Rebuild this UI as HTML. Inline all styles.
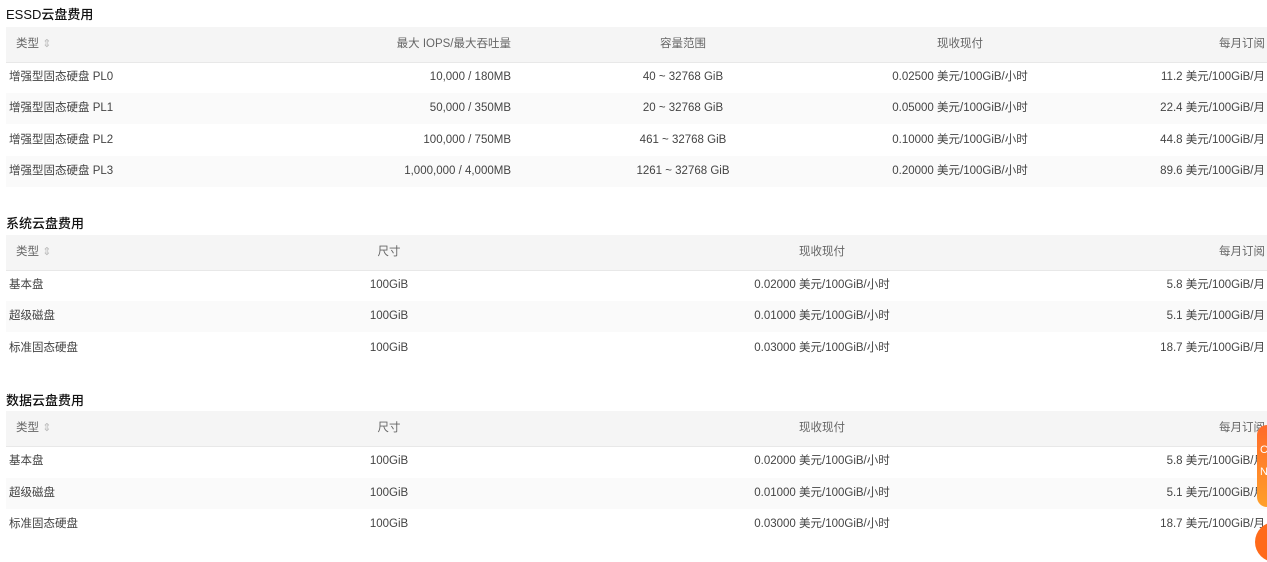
<!DOCTYPE html>
<html><head><meta charset="utf-8"><style>
body{margin:0;width:1267px;height:552px;overflow:hidden;background:#fff;font-family:"Liberation Sans","Noto Sans CJK SC",sans-serif;font-size:11.5px;color:#444;position:relative}
.t{position:absolute;left:6px;font-size:13px;color:#111;font-weight:500}
.r{position:absolute;left:6px;width:1261px;height:31px}
.h{background:#f5f5f5;height:35px;border-bottom:1px solid #e8e8e8;color:#666}
.g{background:#fafafa}
.c{position:absolute;top:0;line-height:31px;white-space:nowrap}
.h .c{line-height:35px}
.L{left:3px}.h .L{left:10px}
.R{transform:translateX(-100%)}
.C{transform:translateX(-50%)}
.s{color:#bbb;font-size:11px}
</style></head><body>
<div class="t" style="top:4px">ESSD云盘费用</div>
<div class="r h" style="top:27px"><span class="c L">类型 <span class="s">⇕</span></span><span class="c R" style="left:505px">最大 IOPS/最大吞吐量</span><span class="c C" style="left:677px">容量范围</span><span class="c C" style="left:954px">现收现付</span><span class="c R" style="left:1259px">每月订阅</span></div>
<div class="r" style="top:62px"><span class="c L">增强型固态硬盘 PL0</span><span class="c R" style="left:505px">10,000 / 180MB</span><span class="c C" style="left:677px">40 ~ 32768 GiB</span><span class="c C" style="left:954px">0.02500 美元/100GiB/小时</span><span class="c R" style="left:1259px">11.2 美元/100GiB/月</span></div>
<div class="r g" style="top:93px"><span class="c L">增强型固态硬盘 PL1</span><span class="c R" style="left:505px">50,000 / 350MB</span><span class="c C" style="left:677px">20 ~ 32768 GiB</span><span class="c C" style="left:954px">0.05000 美元/100GiB/小时</span><span class="c R" style="left:1259px">22.4 美元/100GiB/月</span></div>
<div class="r" style="top:125px"><span class="c L">增强型固态硬盘 PL2</span><span class="c R" style="left:505px">100,000 / 750MB</span><span class="c C" style="left:677px">461 ~ 32768 GiB</span><span class="c C" style="left:954px">0.10000 美元/100GiB/小时</span><span class="c R" style="left:1259px">44.8 美元/100GiB/月</span></div>
<div class="r g" style="top:156px"><span class="c L">增强型固态硬盘 PL3</span><span class="c R" style="left:505px">1,000,000 / 4,000MB</span><span class="c C" style="left:677px">1261 ~ 32768 GiB</span><span class="c C" style="left:954px">0.20000 美元/100GiB/小时</span><span class="c R" style="left:1259px">89.6 美元/100GiB/月</span></div>

<div class="t" style="top:213px">系统云盘费用</div>
<div class="r h" style="top:235px"><span class="c L">类型 <span class="s">⇕</span></span><span class="c C" style="left:383px">尺寸</span><span class="c C" style="left:816px">现收现付</span><span class="c R" style="left:1259px">每月订阅</span></div>
<div class="r" style="top:270px"><span class="c L">基本盘</span><span class="c C" style="left:383px">100GiB</span><span class="c C" style="left:816px">0.02000 美元/100GiB/小时</span><span class="c R" style="left:1259px">5.8 美元/100GiB/月</span></div>
<div class="r g" style="top:301px"><span class="c L">超级磁盘</span><span class="c C" style="left:383px">100GiB</span><span class="c C" style="left:816px">0.01000 美元/100GiB/小时</span><span class="c R" style="left:1259px">5.1 美元/100GiB/月</span></div>
<div class="r" style="top:333px"><span class="c L">标准固态硬盘</span><span class="c C" style="left:383px">100GiB</span><span class="c C" style="left:816px">0.03000 美元/100GiB/小时</span><span class="c R" style="left:1259px">18.7 美元/100GiB/月</span></div>

<div class="t" style="top:390px">数据云盘费用</div>
<div class="r h" style="top:411px"><span class="c L">类型 <span class="s">⇕</span></span><span class="c C" style="left:383px">尺寸</span><span class="c C" style="left:816px">现收现付</span><span class="c R" style="left:1259px">每月订阅</span></div>
<div class="r" style="top:446px"><span class="c L">基本盘</span><span class="c C" style="left:383px">100GiB</span><span class="c C" style="left:816px">0.02000 美元/100GiB/小时</span><span class="c R" style="left:1259px">5.8 美元/100GiB/月</span></div>
<div class="r g" style="top:478px"><span class="c L">超级磁盘</span><span class="c C" style="left:383px">100GiB</span><span class="c C" style="left:816px">0.01000 美元/100GiB/小时</span><span class="c R" style="left:1259px">5.1 美元/100GiB/月</span></div>
<div class="r" style="top:509px"><span class="c L">标准固态硬盘</span><span class="c C" style="left:383px">100GiB</span><span class="c C" style="left:816px">0.03000 美元/100GiB/小时</span><span class="c R" style="left:1259px">18.7 美元/100GiB/月</span></div>

<div style="position:absolute;left:1257px;top:425px;width:30px;height:82px;border-radius:10px 0 0 10px;background:linear-gradient(#ff6a2a,#ffa02a);color:#fff;font-size:11px;line-height:22px;padding:14px 0 0 3px;box-sizing:border-box">C<br>N</div>
<div style="position:absolute;left:1255px;top:522px;width:40px;height:40px;border-radius:50%;background:#ff6a1a"></div>
</body></html>
